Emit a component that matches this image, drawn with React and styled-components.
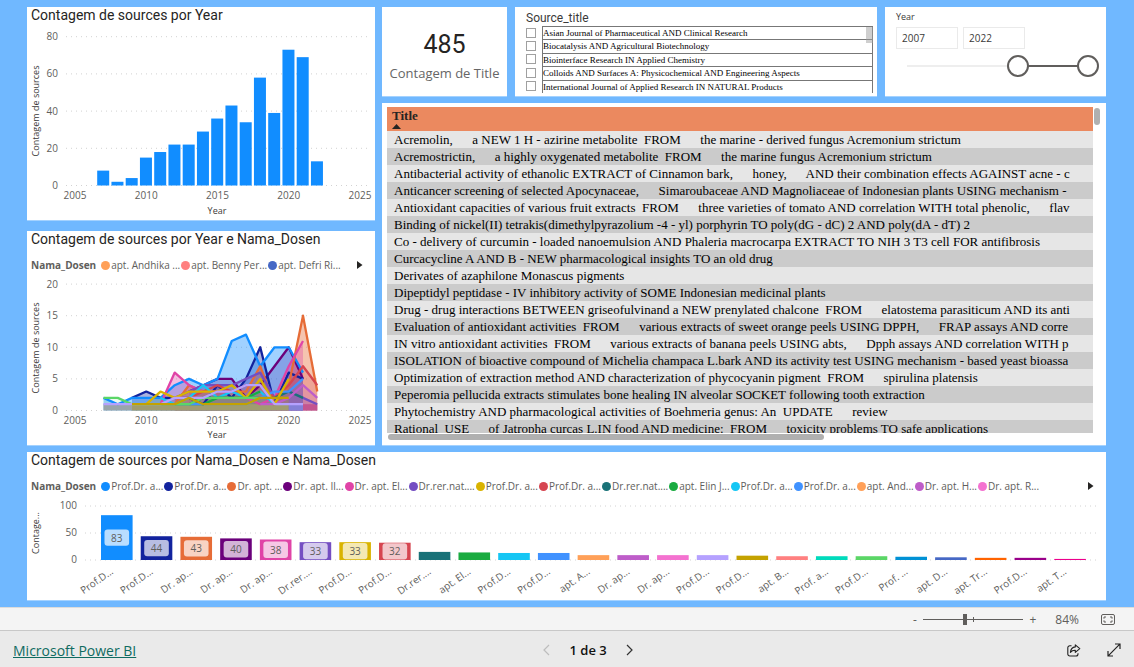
import React, { useState } from 'react';
import styled, { createGlobalStyle } from 'styled-components';

const GlobalStyle = createGlobalStyle`
  * {
    box-sizing: border-box;
  }
  body {
    margin: 0;
    background: #eaeaea;
    font-family: 'Open Sans', 'Noto Sans', sans-serif;
    font-size: 10px;
    color: #605e5c;
  }
  button {
    padding: 0;
    border: none;
    background: none;
    color: inherit;
    font: inherit;
    cursor: pointer;
  }
`;

// Layout
const Report = styled.main`
  display: grid;
  grid-template-columns: 348fr 724fr;
  gap: 7px;
  padding: 7px 28px 7px 27px;
  background: #70b8ff;
`;

const Column = styled.div`
  display: flex;
  flex-direction: column;
  gap: ${(p) => p.$gap}px;
  min-width: 0;
`;

const TopRow = styled.div`
  display: grid;
  grid-template-columns: 125fr 362fr 221fr;
  gap: 8px;
  height: 89px;
`;

const Card = styled.section`
  min-width: 0;
  background: #fff;
  box-shadow: 0 1px 0 #a4d2ff;
`;

const WideCard = styled(Card)`
  grid-column: 1 / -1;
`;

const CardTitle = styled.h2`
  margin: 0;
  padding: 0 0 2px 4px;
  font-family: Roboto, sans-serif;
  font-size: 14px;
  font-weight: 400;
  line-height: 16px;
  color: #252423;
`;

// Charts
const ChartSvg = styled.svg`
  display: block;
  width: 100%;
  height: auto;
  font-size: 10px;
  fill: #605e5c;
`;

const GridLine = styled.line`
  stroke: #d2d2d2;
  stroke-dasharray: 1 4;
`;

const AxisTitle = styled.text`
  font-size: 9px;
  fill: #3b3a39;
  text-anchor: middle;
`;

const LegendRow = styled.div`
  display: flex;
  align-items: center;
  height: 27px;
  padding: 5px 12px 0 4px;
`;

const LegendName = styled.span`
  margin-right: 5px;
  font-weight: 700;
`;

const LegendList = styled.ul`
  display: flex;
  flex: 1;
  gap: 1px;
  margin: 0;
  padding: 0;
  list-style: none;
`;

const LegendItem = styled.li`
  display: flex;
  align-items: center;
  gap: 1px;
  white-space: nowrap;
`;

const Dot = styled.span`
  width: 9px;
  height: 9px;
  border-radius: 50%;
  background: ${(p) => p.$color};
`;

const LegendNext = styled.button`
  display: flex;
`;

// KPI
const KpiCard = styled(Card)`
  display: flex;
  flex-direction: column;
  align-items: center;
  justify-content: center;
  padding-top: 12px;
  overflow: hidden;
`;

const KpiValue = styled.div`
  font-family: Roboto, sans-serif;
  font-size: 25px;
  line-height: 30px;
  color: #252423;
`;

const KpiLabel = styled.div`
  font-size: 13px;
  line-height: 26px;
  white-space: nowrap;
  color: #666;
`;

// Source slicer
const SlicerCard = styled(Card)`
  padding: 3px 4px 0 11px;
`;

const SlicerTitle = styled.h3`
  margin: 0;
  font-family: Roboto, sans-serif;
  font-size: 12px;
  font-weight: 400;
  line-height: 16px;
  color: #3b3a39;
`;

const SlicerList = styled.div`
  position: relative;
  display: grid;
  grid-auto-rows: 1fr;
  height: 67px;
`;

const SlicerItem = styled.label`
  display: flex;
  align-items: center;
  gap: 6px;
  min-height: 0;
`;

const Check = styled.input`
  appearance: none;
  flex: none;
  width: 10px;
  height: 10px;
  margin: 0;
  border: 1px solid #a0a0a0;
  background: #fff;
  &:checked {
    background: #605e5c;
  }
`;

const SlicerText = styled.span`
  flex: 1;
  align-self: stretch;
  border: 1px solid #777;
  border-bottom: none;
  font-family: 'Liberation Serif', serif;
  font-size: 9px;
  line-height: 12px;
  white-space: nowrap;
  overflow: hidden;
  color: #000;
`;

const SlicerThumb = styled.div`
  position: absolute;
  top: 1px;
  right: 0;
  width: 7px;
  height: 16px;
  background: rgba(160, 160, 160, 0.5);
`;

// Year slicer
const YearCard = styled(Card)`
  padding: 3px 7px 0 11px;
`;

const YearTitle = styled.h3`
  margin: 0;
  font-size: 9px;
  font-weight: 400;
  line-height: 14px;
  color: #3b3a39;
`;

const YearInputs = styled.div`
  display: flex;
  gap: 5px;
  margin-top: 3px;
`;

const YearInput = styled.input`
  width: 62px;
  height: 22px;
  padding: 0 5px;
  border: 1px solid #eaeaea;
  font: inherit;
  color: #3b3a39;
`;

const RangeBox = styled.div`
  position: relative;
  height: 22px;
  margin-top: 6px;
`;

const RangeTrack = styled.div`
  position: absolute;
  top: 10px;
  left: 11px;
  right: 11px;
  height: 2px;
  background: #eee;
`;

const RangeFill = styled.div`
  height: 2px;
  margin-left: auto;
  background: #605e5c;
`;

const RangeInput = styled.input`
  appearance: none;
  position: absolute;
  inset: 0;
  width: 100%;
  margin: 0;
  background: none;
  pointer-events: none;
  &::-webkit-slider-thumb {
    appearance: none;
    width: 22px;
    height: 22px;
    border: 2px solid #605e5c;
    border-radius: 50%;
    background: #fff;
    pointer-events: auto;
  }
`;

// Table
const TableCard = styled(Card)`
  display: flex;
  flex-direction: column;
  flex: 1 1 0px;
  min-height: 0;
  padding: 4px 5px 5px;
`;

const TableArea = styled.div`
  display: flex;
  flex: 1;
  min-height: 0;
`;

const TableView = styled.div`
  flex: 1;
  min-width: 0;
  overflow: hidden;
`;

const Table = styled.table`
  width: 100%;
  border-collapse: collapse;
  font-family: 'Liberation Serif', serif;
  font-size: 13px;
  color: #000;
`;

const HeadCell = styled.th`
  height: 24px;
  padding: 1px 5px 0;
  background: #eb895f;
  line-height: 16px;
  text-align: left;
  vertical-align: top;
  color: #252423;
`;

const SortMark = styled.svg`
  display: block;
`;

const Row = styled.tr`
  background: #e6e6e6;
  &:nth-child(even) {
    background: #cbcbcb;
  }
`;

const Cell = styled.td`
  height: 17px;
  padding: 0 7px;
  line-height: 17px;
  white-space: pre;
`;

const VerticalBar = styled.div`
  width: 6px;
  height: 17px;
  margin: 1px 1px 0 1px;
  border-radius: 3px;
  background: #b0b0b0;
`;

const HorizontalBar = styled.div`
  width: 61%;
  height: 6px;
  margin: 1px 0 0 1px;
  border-radius: 3px;
  background: #b0b0b0;
`;

// Bottom bars
const ZoomBar = styled.div`
  display: flex;
  align-items: center;
  justify-content: flex-end;
  height: 24px;
  padding-right: 17px;
  border-top: 1px solid #dcdcdc;
  border-bottom: 1px solid #c8c8c8;
  background: #f4f4f4;
  font-size: 12px;
`;

const ZoomTrack = styled.div`
  position: relative;
  display: flex;
  width: 100px;
  margin: 0 6px 0 4px;
`;

const ZoomTick = styled.span`
  position: absolute;
  top: 4px;
  left: 50%;
  width: 1px;
  height: 5px;
  background: #605e5c;
`;

const ZoomRange = styled.input`
  appearance: none;
  width: 100%;
  height: 12px;
  margin: 0;
  background: linear-gradient(#605e5c, #605e5c) center / 100% 1px no-repeat;
  &::-webkit-slider-thumb {
    appearance: none;
    width: 4px;
    height: 11px;
    background: #605e5c;
  }
`;

const ZoomValue = styled.span`
  width: 42px;
  margin: 0 20px 0 0;
  text-align: right;
`;

const IconButton = styled.button`
  display: flex;
  align-items: center;
  justify-content: center;
  width: ${(p) => p.$width || 16}px;
`;

const Footer = styled.footer`
  display: flex;
  align-items: center;
  justify-content: space-between;
  height: 36px;
  padding-left: 13px;
  padding-top: 2px;
  background: #eaeaea;
  font-size: 13px;
`;

const BrandLink = styled.a`
  font-size: 14px;
  color: #0f6b61;
`;

const Pager = styled.nav`
  display: flex;
  align-items: center;
  gap: 15px;
  font-weight: 600;
  color: #111;
`;

const FooterActions = styled.div`
  display: flex;
  padding-left: 14px;
  color: #222;
`;

const COLORS = [
  '#118dff', '#12239e', '#e66c37', '#6b007b', '#e044a7', '#744ec2', '#d9b300',
  '#d64550', '#197278', '#1aab40', '#15c6f4', '#4092ff', '#ffa058', '#be5dc9',
  '#f472d0', '#b5a1ff', '#c4a200', '#ff8080', '#00dbbc', '#5bd667', '#0091d5',
  '#4668c5', '#ff6300', '#99008a', '#ec008c',
];

const YEAR_COUNTS = [8, 2, 4, 15, 18, 22, 22, 29, 36, 43, 34, 58, 39, 73, 69, 13];

// each series: color, first year, values, fill opacity
const AREAS = [
  ['#6b007b', 2013, [3, 4, 5, 5, 2, 4, 7, 10, 5], 0.3],
  ['#12239e', 2009, [2, 3, 2, 2, 2, 1, 4, 2, 5, 10, 1, 6, 5], 0.35],
  ['#118dff', 2007, [2, 1, 2, 2, 2, 4, 5, 4, 5, 11, 12, 7, 10, 10, 6], 0.4],
  ['#e66c37', 2012, [1, 4, 3, 3, 3, 3, 7, 1, 4, 15, 3], 0.4],
  ['#e044a7', 2011, [1, 6, 4, 3, 3, 3, 2, 1, 2, 7, 11], 0.35],
  ['#744ec2', 2012, [2, 3, 4, 4, 4, 5, 6, 2, 3, 2, 1], 0.3],
  ['#d64550', 2012, [2, 2, 3, 4, 3, 4, 4, 2, 4, 7, 4], 0.25],
  ['#15c6f4', 2011, [2, 1, 2, 4, 2, 3, 2, 3, 1], 0.1],
  ['#197278', 2013, [1, 2, 2, 2, 2, 2, 2, 3, 2], 0.1],
  ['#1aab40', 2012, [1, 1, 1, 2, 2, 2, 3], 0.1],
  ['#be5dc9', 2018, [1, 1, 2, 4, 2], 0.2],
  ['#4092ff', 2009, [1, 1, 1, 1, 1, 1, 1, 1, 1, 2, 3, 3, 5], 0.2],
  ['#d9b300', 2009, [1, 1, 3, 2, 3, 3, 3, 4, 2, 5, 1, 5], 0.15],
  ['#5bd667', 2007, [2, 2, 1, 1, 1, 1, 1, 2, 2, 2, 2, 2], 0.1],
  ['#b5a1ff', 2007, [1, 1, 1, 1, 1, 2, 2, 2, 3, 3, 4, 4, 1, 1, 1], 0.1],
  ['#c4a200', 2009, [1, 1, 1, 1, 2, 1, 1, 1, 1, 2, 2, 2], 0.1],
];

const BANDS = [
  ['#9aa5ab', 2007, 2009],
  ['#a09c70', 2009, 2020],
  ['#8480d8', 2020, 2021],
  ['#c45590', 2021, 2022],
];

const AREA_LEGEND = [
  ['apt. Andhika ...', '#ffa058'],
  ['apt. Benny Per...', '#ff8080'],
  ['apt. Defri Ri...', '#4668c5'],
];

const BAR_LEGEND = [
  'Prof.Dr. a...', 'Prof.Dr. a...', 'Dr. apt. ...', 'Dr. apt. Il...', 'Dr. apt. El...',
  'Dr.rer.nat....', 'Prof.Dr. a...', 'Prof.Dr. a...', 'Dr.rer.nat....', 'apt. Elin J...',
  'Prof.Dr. a...', 'Prof.Dr. a...', 'apt. And...', 'Dr. apt. H...', 'Dr. apt. R...',
].map((name, i) => [name, COLORS[i]]);

const LECTURERS = [
  ['Prof.D...', 83], ['Prof.D...', 44], ['Dr. ap...', 43], ['Dr. ap...', 40], ['Dr. ap...', 38],
  ['Dr.rer....', 33], ['Prof.D...', 33], ['Prof.D...', 32], ['Dr.rer....', 15], ['apt. El...', 14],
  ['Prof.D...', 13], ['Prof.D...', 13], ['apt. A...', 9], ['Dr. ap...', 9], ['Dr. ap...', 9],
  ['Prof.D...', 9], ['Prof.D...', 8], ['apt. B...', 7], ['Prof. a...', 7], ['Prof.D...', 7],
  ['Prof. ...', 6], ['apt. D...', 5], ['apt. Tr...', 4], ['Prof.D...', 4], ['apt. T...', 2],
];

const SOURCES = [
  'Asian Journal of Pharmaceutical AND Clinical Research',
  'Biocatalysis AND Agricultural Biotechnology',
  'Biointerface Research IN Applied Chemistry',
  'Colloids AND Surfaces A: Physicochemical AND Engineering Aspects',
  'International Journal of Applied Research IN NATURAL Products',
];

const TITLES = [
  'Acremolin,      a NEW 1 H - azirine metabolite  FROM      the marine - derived fungus Acremonium strictum',
  'Acremostrictin,      a highly oxygenated metabolite  FROM      the marine fungus Acremonium strictum',
  'Antibacterial activity of ethanolic EXTRACT of Cinnamon bark,      honey,      AND their combination effects AGAINST acne - c',
  'Anticancer screening of selected Apocynaceae,      Simaroubaceae AND Magnoliaceae of Indonesian plants USING mechanism -',
  'Antioxidant capacities of various fruit extracts  FROM      three varieties of tomato AND correlation WITH total phenolic,      flav',
  'Binding of nickel(II) tetrakis(dimethylpyrazolium -4 - yl) porphyrin TO poly(dG - dC) 2 AND poly(dA - dT) 2',
  'Co - delivery of curcumin - loaded nanoemulsion AND Phaleria macrocarpa EXTRACT TO NIH 3 T3 cell FOR antifibrosis',
  'Curcacycline A AND B - NEW pharmacological insights TO an old drug',
  'Derivates of azaphilone Monascus pigments',
  'Dipeptidyl peptidase - IV inhibitory activity of SOME Indonesian medicinal plants',
  'Drug - drug interactions BETWEEN griseofulvinand a NEW prenylated chalcone  FROM      elatostema parasiticum AND its anti',
  'Evaluation of antioxidant activities  FROM      various extracts of sweet orange peels USING DPPH,      FRAP assays AND corre',
  'IN vitro antioxidant activities  FROM      various extracts of banana peels USING abts,      Dpph assays AND correlation WITH p',
  'ISOLATION of bioactive compound of Michelia champaca L.bark AND its activity test USING mechanism - based yeast bioassa',
  'Optimization of extraction method AND characterization of phycocyanin pigment  FROM      spirulina platensis',
  'Peperomia pellucida extracts stimulates bone healing IN alveolar SOCKET following tooth extraction',
  'Phytochemistry AND pharmacological activities of Boehmeria genus: An  UPDATE      review',
  'Rational  USE      of Jatropha curcas L.IN food AND medicine:  FROM      toxicity problems TO safe applications',
];

const YEAR_TICKS = [2005, 2010, 2015, 2020, 2025];
const MIN_YEAR = 1983;
const MAX_YEAR = 2022;

const xOf = (year) => 48 + (year - 2005) * 14.25;

const Legend = ({ items }) => (
  <LegendRow>
    <LegendName>Nama_Dosen</LegendName>
    <LegendList>
      {items.map(([name, color], i) => (
        <LegendItem key={i}>
          <Dot $color={color} />
          {name}
        </LegendItem>
      ))}
    </LegendList>
    <LegendNext aria-label="Próximo">
      <svg width="6" height="8" viewBox="0 0 6 8">
        <path d="M0 0L5.5 4L0 8Z" fill="#252423" />
      </svg>
    </LegendNext>
  </LegendRow>
);

const YearBars = () => {
  const yOf = (v) => 160.5 - v * 1.86;
  return (
    <ChartSvg viewBox="0 0 348 195">
      {[0, 20, 40, 60, 80].map((v) => (
        <g key={v}>
          <GridLine x1="39" x2="341" y1={yOf(v)} y2={yOf(v)} />
          <text x="31" y={yOf(v) + 3.5} textAnchor="end">{v}</text>
        </g>
      ))}
      {YEAR_COUNTS.map((v, i) => (
        <rect
          key={i}
          x={xOf(2007 + i) - 6.3}
          y={yOf(v)}
          width="12"
          height={v * 1.86}
          fill="#118dff"
        />
      ))}
      {YEAR_TICKS.map((year) => (
        <text key={year} x={xOf(year)} y="174" textAnchor="middle">{year}</text>
      ))}
      <AxisTitle x="190" y="189">Year</AxisTitle>
      <AxisTitle transform="translate(12 86) rotate(-90)">Contagem de sources</AxisTitle>
    </ChartSvg>
  );
};

const YearAreas = () => {
  const yOf = (v) => 134.5 - v * 6.32;
  return (
    <ChartSvg viewBox="0 0 348 169">
      {[0, 5, 10, 15, 20].map((v) => (
        <g key={v}>
          <GridLine x1="39" x2="341" y1={yOf(v)} y2={yOf(v)} />
          <text x="31" y={yOf(v) + 3.5} textAnchor="end">{v}</text>
        </g>
      ))}
      {AREAS.map(([color, start, values, opacity]) => {
        const points = values.map((v, i) => `${xOf(start + i)},${yOf(v)}`).join(' ');
        const end = start + values.length - 1;
        return (
          <polygon
            key={color}
            points={`${xOf(start)},${yOf(0)} ${points} ${xOf(end)},${yOf(0)}`}
            fill={color}
            fillOpacity={opacity}
          />
        );
      })}
      {BANDS.map(([color, from, to]) => (
        <rect
          key={color}
          x={xOf(from)}
          y={yOf(1)}
          width={xOf(to) - xOf(from)}
          height="6.3"
          fill={color}
        />
      ))}
      {AREAS.map(([color, start, values]) => (
        <polyline
          key={color}
          points={values.map((v, i) => `${xOf(start + i)},${yOf(v)}`).join(' ')}
          fill="none"
          stroke={color}
          strokeWidth="2.3"
          strokeLinejoin="round"
        />
      ))}
      {YEAR_TICKS.map((year) => (
        <text key={year} x={xOf(year)} y="148" textAnchor="middle">{year}</text>
      ))}
      <AxisTitle x="190" y="162">Year</AxisTitle>
      <AxisTitle transform="translate(12 72) rotate(-90)">Contagem de sources</AxisTitle>
    </ChartSvg>
  );
};

const LecturerBars = () => {
  const yOf = (v) => 63 - v * 0.54;
  return (
    <ChartSvg viewBox="0 0 1079 103">
      {[0, 50, 100].map((v) => (
        <g key={v}>
          <GridLine x1="58" x2="1072" y1={yOf(v)} y2={yOf(v)} />
          <text x="50" y={yOf(v) + 3} textAnchor="end">{v}</text>
        </g>
      ))}
      {LECTURERS.map(([name, v], i) => {
        const x = 74 + i * 39.72;
        const mid = yOf(v / 2);
        return (
          <g key={i}>
            <rect x={x} y={yOf(v)} width="31.6" height={v * 0.54} fill={COLORS[i]} />
            {v > 30 && (
              <>
                <rect x={x + 3.5} y={mid - 8.2} width="24.6" height="16.4" rx="3" fill="#fff" fillOpacity="0.7" />
                <text x={x + 15.8} y={mid + 4} textAnchor="middle">{v}</text>
              </>
            )}
            <text transform={`translate(${x + 13} 76) rotate(-35)`} textAnchor="end">{name}</text>
          </g>
        );
      })}
      <AxisTitle transform="translate(12 36) rotate(-90)">Contage...</AxisTitle>
    </ChartSvg>
  );
};

const YearSlicer = () => {
  const [from, setFrom] = useState(2007);
  const [to, setTo] = useState(2022);
  const span = MAX_YEAR - MIN_YEAR;

  return (
    <YearCard>
      <YearTitle>Year</YearTitle>
      <YearInputs>
        <YearInput aria-label="Ano inicial" value={from} onChange={(e) => setFrom(Number(e.target.value))} />
        <YearInput aria-label="Ano final" value={to} onChange={(e) => setTo(Number(e.target.value))} />
      </YearInputs>
      <RangeBox>
        <RangeTrack>
          <RangeFill style={{ width: `${((to - from) / span) * 100}%` }} />
        </RangeTrack>
        <RangeInput
          type="range"
          aria-label="Início do intervalo"
          min={MIN_YEAR}
          max={MAX_YEAR}
          value={from}
          onChange={(e) => setFrom(Number(e.target.value))}
        />
        <RangeInput
          type="range"
          aria-label="Fim do intervalo"
          min={MIN_YEAR}
          max={MAX_YEAR}
          value={to}
          onChange={(e) => setTo(Number(e.target.value))}
        />
      </RangeBox>
    </YearCard>
  );
};

const App = () => {
  const [zoom, setZoom] = useState(84);

  return (
    <>
      <GlobalStyle />
      <Report>
        <Column $gap={11}>
          <Card>
            <CardTitle>Contagem de sources por Year</CardTitle>
            <YearBars />
          </Card>
          <Card>
            <CardTitle>Contagem de sources por Year e Nama_Dosen</CardTitle>
            <Legend items={AREA_LEGEND} />
            <YearAreas />
          </Card>
        </Column>
        <Column $gap={7}>
          <TopRow>
            <KpiCard>
              <KpiValue>485</KpiValue>
              <KpiLabel>Contagem de Title</KpiLabel>
            </KpiCard>
            <SlicerCard>
              <SlicerTitle>Source_title</SlicerTitle>
              <SlicerList>
                {SOURCES.map((source) => (
                  <SlicerItem key={source}>
                    <Check type="checkbox" />
                    <SlicerText>{source}</SlicerText>
                  </SlicerItem>
                ))}
                <SlicerThumb />
              </SlicerList>
            </SlicerCard>
            <YearSlicer />
          </TopRow>
          <TableCard>
            <TableArea>
              <TableView>
                <Table>
                  <thead>
                    <tr>
                      <HeadCell>
                        Title
                        <SortMark width="9" height="5" viewBox="0 0 9 5">
                          <path d="M0 5L4.5 0L9 5Z" fill="#252423" />
                        </SortMark>
                      </HeadCell>
                    </tr>
                  </thead>
                  <tbody>
                    {TITLES.map((title) => (
                      <Row key={title}>
                        <Cell>{title}</Cell>
                      </Row>
                    ))}
                  </tbody>
                </Table>
              </TableView>
              <VerticalBar />
            </TableArea>
            <HorizontalBar />
          </TableCard>
        </Column>
        <WideCard>
          <CardTitle>Contagem de sources por Nama_Dosen e Nama_Dosen</CardTitle>
          <Legend items={BAR_LEGEND} />
          <LecturerBars />
        </WideCard>
      </Report>
      <ZoomBar>
        <IconButton $width={8} aria-label="Reduzir" onClick={() => setZoom(zoom - 10)}>-</IconButton>
        <ZoomTrack>
          <ZoomRange
            type="range"
            aria-label="Zoom"
            min="0"
            max="200"
            value={zoom}
            onChange={(e) => setZoom(Number(e.target.value))}
          />
          <ZoomTick />
        </ZoomTrack>
        <IconButton $width={8} aria-label="Ampliar" onClick={() => setZoom(zoom + 10)}>+</IconButton>
        <ZoomValue>{zoom}%</ZoomValue>
        <IconButton $width={18} aria-label="Ajustar à página">
          <svg width="14" height="11" viewBox="0 0 14 11" fill="none" stroke="#605e5c">
            <rect x="0.5" y="0.5" width="13" height="10" rx="1.5" />
            <path d="M5 3H3V4.7M9 3H11V4.7M5 8H3V6.3M9 8H11V6.3" />
          </svg>
        </IconButton>
      </ZoomBar>
      <Footer>
        <BrandLink href="#powerbi">Microsoft Power BI</BrandLink>
        <Pager>
          <IconButton aria-label="Página anterior" disabled>
            <svg width="7" height="12" viewBox="0 0 7 12" fill="none" stroke="#bdbdbd" strokeWidth="1.2">
              <path d="M6 1L1 6L6 11" />
            </svg>
          </IconButton>
          <span>1 de 3</span>
          <IconButton aria-label="Próxima página">
            <svg width="7" height="12" viewBox="0 0 7 12" fill="none" stroke="#333" strokeWidth="1.2">
              <path d="M1 1L6 6L1 11" />
            </svg>
          </IconButton>
        </Pager>
        <FooterActions>
          <IconButton $width={40} aria-label="Compartilhar">
            <svg width="14" height="13" viewBox="0 0 14 13" fill="none" stroke="currentColor" strokeWidth="1.1" strokeLinejoin="round">
              <path d="M4.5 1.7H2.8A2 2 0 0 0 0.8 3.7V10A2 2 0 0 0 2.8 12H9A2 2 0 0 0 11 10V9.2" />
              <path d="M8.3 0.8L12.8 4.6L8.3 8.4V6.3C6 6.2 4.6 6.9 3.4 8.4C3.7 5.2 5.4 3.1 8.3 2.9Z" />
            </svg>
          </IconButton>
          <IconButton $width={40} aria-label="Tela inteira">
            <svg width="14" height="14" viewBox="0 0 14 14" fill="none" stroke="currentColor" strokeWidth="1.2">
              <path d="M1.2 12.8L12.8 1.2M8 1H13V6M1 8V13H6" />
            </svg>
          </IconButton>
        </FooterActions>
      </Footer>
    </>
  );
};

export default App;
